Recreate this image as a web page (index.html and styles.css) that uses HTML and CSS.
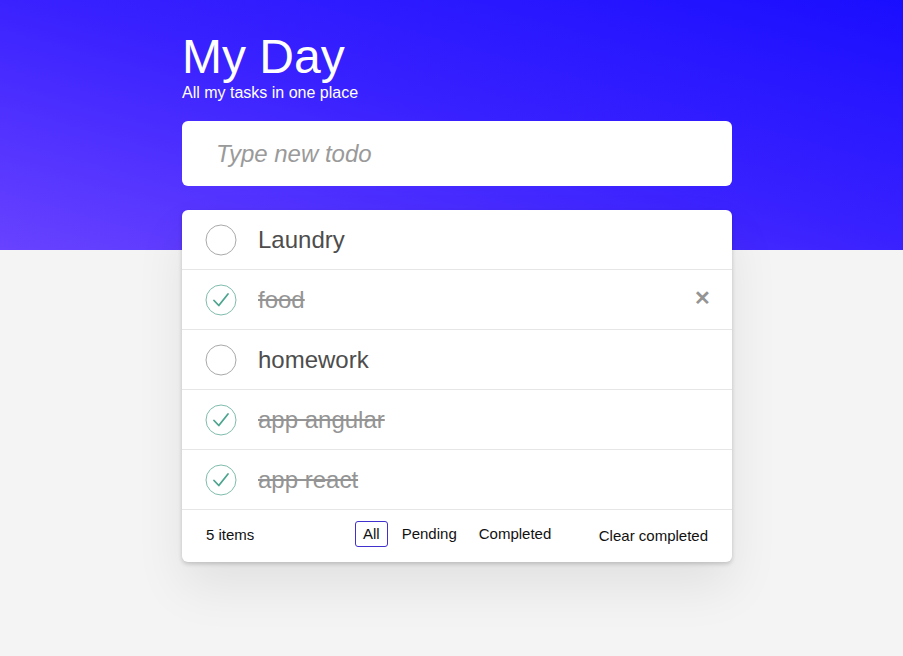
FILE: index.html
```html
<!DOCTYPE html>
<html lang="en">
<head>
<meta charset="utf-8">
<title>My Day</title>
<link rel="stylesheet" href="styles.css">
</head>
<body>
<div class="hero"></div>
<main class="app">
  <header class="head">
    <h1 class="title">My Day</h1>
    <p class="subtitle">All my tasks in one place</p>
  </header>
  <input class="new-todo" type="text" placeholder="Type new todo">
  <section class="card">
    <ul class="list">
      <li class="item">
        <span class="toggle"><svg viewBox="0 0 32 32" width="32" height="32"><circle cx="16" cy="16" r="15" fill="none" stroke="#a9a9a9" stroke-width="1"/></svg></span>
        <span class="label">Laundry</span>
      </li>
      <li class="item done">
        <span class="toggle"><svg viewBox="0 0 32 32" width="32" height="32"><circle cx="16" cy="16" r="15" fill="none" stroke="#7fbcad" stroke-width="1"/><path d="M9 16.5 L13.8 21.5 L23 10" fill="none" stroke="#4fa48f" stroke-width="1.8" stroke-linecap="round" stroke-linejoin="round"/></svg></span>
        <span class="label">food</span>
        <span class="destroy">✕</span>
      </li>
      <li class="item">
        <span class="toggle"><svg viewBox="0 0 32 32" width="32" height="32"><circle cx="16" cy="16" r="15" fill="none" stroke="#a9a9a9" stroke-width="1"/></svg></span>
        <span class="label">homework</span>
      </li>
      <li class="item done">
        <span class="toggle"><svg viewBox="0 0 32 32" width="32" height="32"><circle cx="16" cy="16" r="15" fill="none" stroke="#7fbcad" stroke-width="1"/><path d="M9 16.5 L13.8 21.5 L23 10" fill="none" stroke="#4fa48f" stroke-width="1.8" stroke-linecap="round" stroke-linejoin="round"/></svg></span>
        <span class="label">app angular</span>
      </li>
      <li class="item done">
        <span class="toggle"><svg viewBox="0 0 32 32" width="32" height="32"><circle cx="16" cy="16" r="15" fill="none" stroke="#7fbcad" stroke-width="1"/><path d="M9 16.5 L13.8 21.5 L23 10" fill="none" stroke="#4fa48f" stroke-width="1.8" stroke-linecap="round" stroke-linejoin="round"/></svg></span>
        <span class="label">app react</span>
      </li>
    </ul>
    <footer class="footer">
      <span class="count">5 items</span>
      <nav class="filters">
        <a class="filter selected">All</a>
        <a class="filter">Pending</a>
        <a class="filter">Completed</a>
      </nav>
      <span class="clear">Clear completed</span>
    </footer>
  </section>
</main>
</body>
</html>
```

FILE: styles.css
```css
* { box-sizing: border-box; }
html, body { margin: 0; padding: 0; }
body {
  background: #f4f4f4;
  font-family: "Liberation Sans", Arial, sans-serif;
  color: #4d4d4d;
  min-height: 656px;
  position: relative;
}
.hero {
  height: 250px;
  background: linear-gradient(to top right, #6842ff 0%, #3a22ff 50%, #1a0eff 100%);
}
.app {
  position: absolute;
  top: 0;
  left: 182px;
  width: 550px;
}
.head { padding-top: 32px; color: #fff; }
.title {
  margin: 0;
  font-size: 48px;
  font-weight: 400;
  line-height: 49px;
  color: #fff;
}
.subtitle {
  margin: 0;
  font-size: 16px;
  line-height: 19px;
  color: #fff;
  position: relative;
  top: 2px;
}
.new-todo {
  display: block;
  width: 100%;
  height: 65px;
  margin-top: 21px;
  border: none;
  border-radius: 6px;
  background: #fff;
  padding: 0 0 0 34px;
  font-family: inherit;
  font-size: 24px;
  color: #4d4d4d;
  outline: none;
}
.new-todo::placeholder { color: #9a9a9a; font-style: italic; }
.card {
  margin-top: 24px;
  background: #fff;
  border-radius: 6px;
  box-shadow: 0 2px 4px rgba(0,0,0,0.18), 0 25px 50px rgba(0,0,0,0.08);
  overflow: hidden;
}
.list { list-style: none; margin: 0; padding: 0; }
.item {
  height: 60px;
  border-bottom: 1px solid #e6e6e6;
  display: flex;
  align-items: center;
  padding-left: 23px;
  padding-right: 24px;
}
.toggle { width: 32px; height: 32px; display: flex; }
.label {
  margin-left: 21px;
  font-size: 24px;
  color: #4d4d4d;
  flex: 1;
}
.done .label { color: #949494; text-decoration: line-through; }
.destroy {
  color: #949494;
  font-size: 20px;
  font-weight: 700;
  position: relative;
  top: -2px;
  left: 3px;
}
.footer {
  height: 52px;
  display: flex;
  align-items: center;
  padding: 0 24px 4px;
  font-size: 15px;
  color: #111;
}
.count { width: 149px; }
.filters { display: flex; gap: 6px; }
.filter {
  padding: 3px 7px 4px;
  border: 1px solid transparent;
  border-radius: 3px;
  color: #111;
}
.filter.selected { border-color: #4030cc; }
.clear { margin-left: auto; position: relative; top: 1px; }
```
